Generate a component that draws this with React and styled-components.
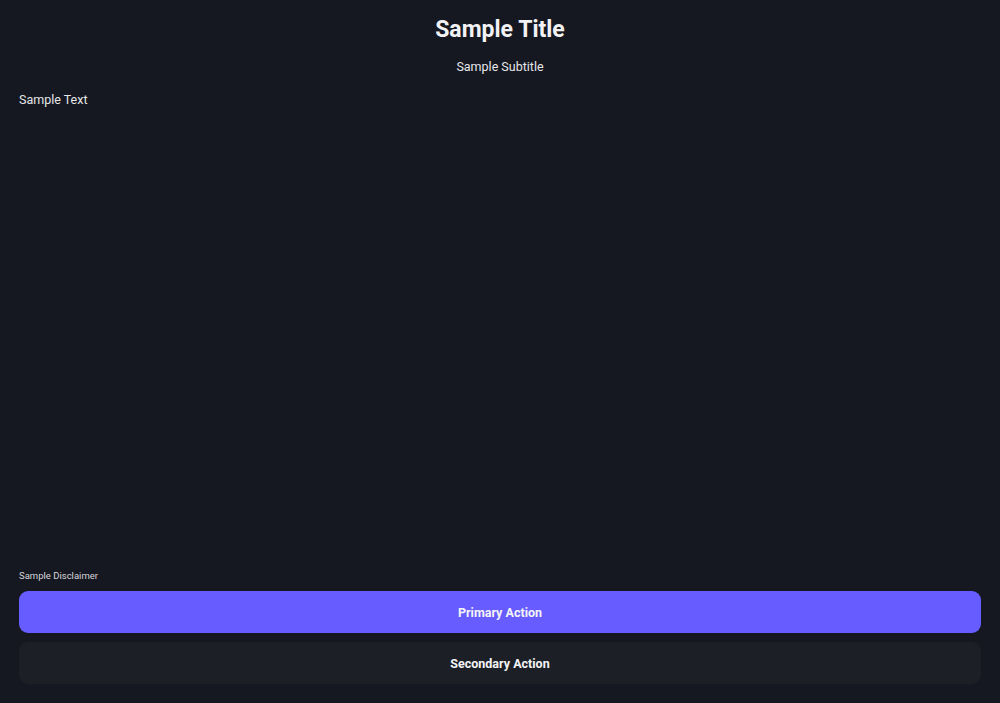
import React from 'react';
import styled, { createGlobalStyle } from 'styled-components';

const GlobalStyle = createGlobalStyle`
  html, body {
    margin: 0;
    padding: 0;
    height: 100%;
    background: #151820;
  }
  #root {
    height: 100%;
  }
  * {
    box-sizing: border-box;
  }
`;

const Page = styled.div`
  height: 100vh;
  display: flex;
  flex-direction: column;
  padding: 16px 19px 19px;
  background: #151820;
  color: #f2f2f4;
  font-family: Roboto, "Liberation Sans", sans-serif;
`;

const Title = styled.h1`
  margin: 0;
  text-align: center;
  font-size: 23px;
  line-height: 27px;
  font-weight: 700;
`;

const Subtitle = styled.p`
  margin: 16px 0 0;
  text-align: center;
  font-size: 12.5px;
  line-height: 16px;
  color: #e6e6ea;
`;

const Body = styled.p`
  flex: 1;
  margin: 17px 0 0;
  font-size: 12.5px;
  line-height: 16px;
  color: #e6e6ea;
`;

const Disclaimer = styled.p`
  margin: 0 0 9px;
  font-size: 9.5px;
  line-height: 12px;
  color: #d6d6dc;
`;

const Actions = styled.div`
  display: flex;
  flex-direction: column;
  gap: 9px;
`;

const Button = styled.button`
  height: 42px;
  border: none;
  border-radius: 9px;
  font-family: inherit;
  font-size: 12.5px;
  font-weight: 700;
  color: #f4f4f6;
  background: ${(p) => (p.$primary ? '#665cff' : '#1c1f26')};
  cursor: pointer;
`;

function App() {
  return (
    <>
      <GlobalStyle />
      <Page>
        <Title>Sample Title</Title>
        <Subtitle>Sample Subtitle</Subtitle>
        <Body>Sample Text</Body>
        <Disclaimer>Sample Disclaimer</Disclaimer>
        <Actions>
          <Button $primary>Primary Action</Button>
          <Button>Secondary Action</Button>
        </Actions>
      </Page>
    </>
  );
}

export default App;
